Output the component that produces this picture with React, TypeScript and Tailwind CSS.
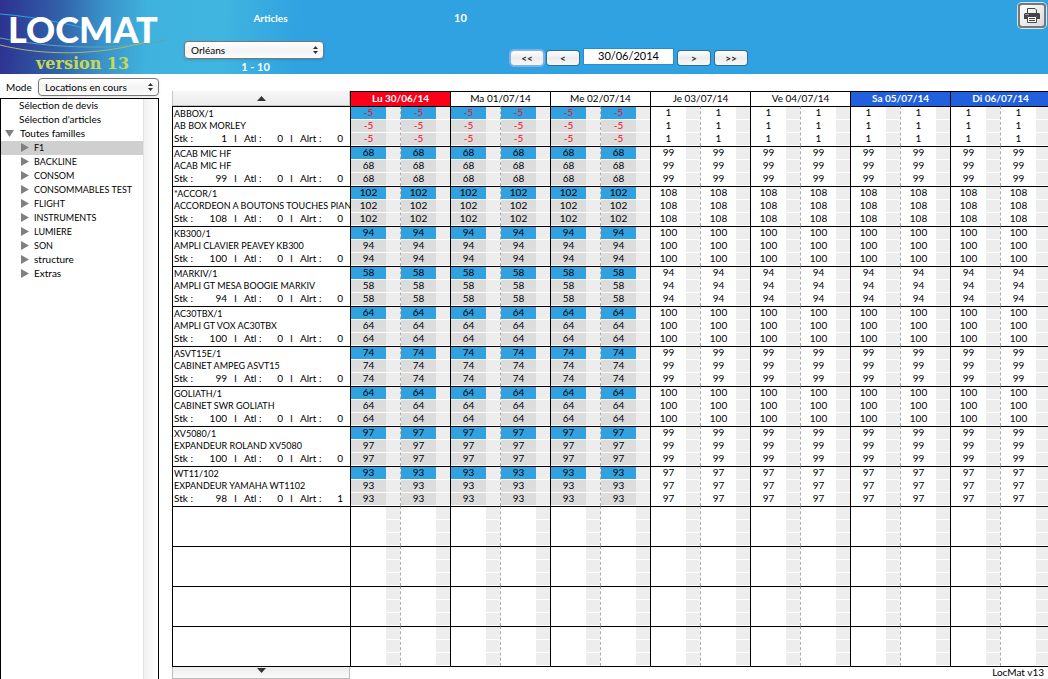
import React, { useState } from 'react';

type Mark = 'busy' | 'free' | 'short';

interface Article {
  code: string;
  name: string;
  stk: number;
  atl: number;
  alrt: number;
  rented: number;
  available: number;
}

const articles: Article[] = [
  { code: 'ABBOX/1', name: 'AB BOX MORLEY', stk: 1, atl: 0, alrt: 0, rented: -5, available: 1 },
  { code: 'ACAB MIC HF', name: 'ACAB MIC HF', stk: 99, atl: 0, alrt: 0, rented: 68, available: 99 },
  { code: '*ACCOR/1', name: 'ACCORDEON A BOUTONS TOUCHES PIAN', stk: 108, atl: 0, alrt: 0, rented: 102, available: 108 },
  { code: 'KB300/1', name: 'AMPLI CLAVIER PEAVEY KB300', stk: 100, atl: 0, alrt: 0, rented: 94, available: 100 },
  { code: 'MARKIV/1', name: 'AMPLI GT MESA BOOGIE MARKIV', stk: 94, atl: 0, alrt: 0, rented: 58, available: 94 },
  { code: 'AC30TBX/1', name: 'AMPLI GT VOX AC30TBX', stk: 100, atl: 0, alrt: 0, rented: 64, available: 100 },
  { code: 'ASVT15E/1', name: 'CABINET AMPEG ASVT15', stk: 99, atl: 0, alrt: 0, rented: 74, available: 99 },
  { code: 'GOLIATH/1', name: 'CABINET SWR GOLIATH', stk: 100, atl: 0, alrt: 0, rented: 64, available: 100 },
  { code: 'XV5080/1', name: 'EXPANDEUR ROLAND XV5080', stk: 100, atl: 0, alrt: 0, rented: 97, available: 99 },
  { code: 'WT11/102', name: 'EXPANDEUR YAMAHA WT1102', stk: 98, atl: 0, alrt: 1, rented: 93, available: 97 },
];

const days = [
  { label: 'Lu 30/06/14', style: 'bg-[#fb0019] text-white font-bold', rented: true },
  { label: 'Ma 01/07/14', style: 'bg-white font-normal', rented: true },
  { label: 'Me 02/07/14', style: 'bg-white font-normal', rented: true },
  { label: 'Je 03/07/14', style: 'bg-white font-normal', rented: false },
  { label: 'Ve 04/07/14', style: 'bg-white font-normal', rented: false },
  { label: 'Sa 05/07/14', style: 'bg-[#2160dd] text-white font-bold', rented: false },
  { label: 'Di 06/07/14', style: 'bg-[#2160dd] text-white font-bold', rented: false },
];

// morning / afternoon for each day
const halves = days.flatMap((day) => [
  { key: day.label + '-am', rented: day.rented, first: true },
  { key: day.label + '-pm', rented: day.rented, first: false },
]);

const families = ['F1', 'BACKLINE', 'CONSOM', 'CONSOMMABLES TEST', 'FLIGHT', 'INSTRUMENTS', 'LUMIERE', 'SON', 'structure', 'Extras'];

const Arrow: React.FC<{ dir: 'up' | 'down' | 'right'; className: string }> = ({ dir, className }) => {
  const points = { up: '0,10 5,0 10,10', down: '0,0 10,0 5,10', right: '0,0 10,5 0,10' }[dir];
  return (
    <svg viewBox="0 0 10 10" preserveAspectRatio="none" className={className} fill="currentColor" aria-hidden="true">
      <polygon points={points} />
    </svg>
  );
};

const Dropdown: React.FC<{ id: string; label: string; options: string[]; className: string }> = ({ id, label, options, className }) => (
  <div className={`relative ${className}`}>
    <select
      id={id}
      aria-label={label}
      className="block h-[18px] w-full appearance-none rounded border border-[#777] bg-linear-to-b from-white via-[#f4f4f4] to-[#fbfbfb] pl-1.5 text-[10px] leading-4 text-black shadow-sm"
    >
      {options.map((option) => (
        <option key={option}>{option}</option>
      ))}
    </select>
    <div className="pointer-events-none absolute inset-y-0 right-1.5 flex flex-col items-center justify-center gap-0.5 text-[#333]">
      <Arrow dir="up" className="h-[3px] w-[5px]" />
      <Arrow dir="down" className="h-[3px] w-[5px]" />
    </div>
  </div>
);

const NavButton: React.FC<{ label: string; title: string; focused?: boolean }> = ({ label, title, focused }) => (
  <button
    aria-label={title}
    className={`h-3.5 w-8 rounded-[3px] bg-linear-to-b from-white via-[#ececec] to-[#f8f8f8] text-[10px] leading-[14px] font-bold text-[#222] ${
      focused ? 'ring-2 ring-[#7fb0ea]' : 'ring-1 ring-[#2b6f9b]'
    }`}
  >
    {label}
  </button>
);

const Logo = () => (
  <div className="relative h-full w-[170px] shrink-0">
    <svg viewBox="0 0 170 74" className="absolute inset-0 h-full w-full" fill="none" aria-hidden="true">
      <path d="M0 14 C40 17 85 27 125 39" stroke="#27a9dd" />
      <path d="M0 38 C45 47 110 52 166 40" stroke="#5aa7b4" />
      <path d="M0 45 C40 55 95 57 150 41" stroke="#a9b676" />
    </svg>
    <div className="relative pt-[9px] pl-2 font-['Lato',sans-serif] text-[36px] leading-10 font-black text-white">LOCMAT</div>
    <div className="relative mt-1 pl-9 font-['DejaVu_Serif',serif] text-[16px] leading-[22px] font-bold whitespace-nowrap text-[#c9d94f]">
      version 13
    </div>
  </div>
);

const SlotValues: React.FC<{ values: number[]; rented: boolean }> = ({ values, rented }) => (
  <>
    {[0, 1, 2].map((line) => {
      const value = values[line];
      const mark: Mark = value === undefined || !rented ? 'free' : value < 0 ? 'short' : 'busy';
      const bg = mark === 'free' ? 'bg-white' : line === 0 ? 'bg-[#30a2e1]' : 'bg-[#dcdcdc]';
      return (
        <div key={line} className="flex h-[13px] border-b border-white">
          <div className={`w-[35px] shrink-0 text-center leading-[11px] ${bg} ${mark === 'short' ? 'text-[#fb0019]' : 'text-black'}`}>{value}</div>
          <div className="flex-1 bg-[#ededed]" />
        </div>
      );
    })}
  </>
);

const ArticleCell: React.FC<{ article: Article }> = ({ article }) => (
  <div className="h-[39px] pl-px leading-3 whitespace-nowrap">
    <div className="text-[9px] leading-[13px]">{article.code}</div>
    <div className="text-[9px]">{article.name}</div>
    <div className="flex">
      <span className="w-5">Stk :</span>
      <span className="w-[33px] text-right">{article.stk}</span>
      <span className="w-[17px] text-center">l</span>
      <span className="w-[19px]">Atl :</span>
      <span className="w-5 text-right">{article.atl}</span>
      <span className="w-[17px] text-center">l</span>
      <span className="w-6">Alrt :</span>
      <span className="w-[19px] text-right">{article.alrt}</span>
    </div>
  </div>
);

const Planning = () => {
  const rows: (Article | null)[] = [...articles, null, null, null, null];
  return (
    <table className="w-full min-w-[878px] table-fixed border-separate border-spacing-0 border-b border-black">
      <colgroup>
        <col className="w-[178px]" />
        {halves.map((half) => (
          <col key={half.key} />
        ))}
      </colgroup>
      <thead>
        <tr className="h-[15px]">
          <td className="p-0">
            <button aria-label="Articles précédents" className="flex h-[15px] w-full items-center justify-center border-x border-b border-[#c4c4c4] bg-linear-to-b from-[#f7f7f7] to-[#ececec] text-[#333]">
              <Arrow dir="up" className="h-[5px] w-[9px]" />
            </button>
          </td>
          {days.map((day) => (
            <th key={day.label} colSpan={2} className={`border-t border-l border-black p-0 pb-0.5 text-[10px] leading-3 ${day.style}`}>
              {day.label}
            </th>
          ))}
        </tr>
      </thead>
      <tbody>
        {rows.map((article, i) => (
          <tr key={i} className="h-10">
            <td className="border-t border-l border-black p-0">{article && <ArticleCell article={article} />}</td>
            {halves.map((half) => (
              <td
                key={half.key}
                className={`border-t border-l border-t-black p-0 ${half.first ? 'border-l-black' : 'border-l-[#aaa] [border-left-style:dashed]'}`}
              >
                <SlotValues
                  rented={half.rented}
                  values={article ? Array(3).fill(half.rented ? article.rented : article.available) : []}
                />
              </td>
            ))}
          </tr>
        ))}
      </tbody>
    </table>
  );
};

const Sidebar = () => {
  const [selected, setSelected] = useState('F1');

  return (
    <aside className="flex w-[159px] shrink-0 flex-col">
      <div className="flex h-6 items-center pt-0.5">
        <label htmlFor="mode" className="w-[38px] pl-1.5">Mode</label>
        <Dropdown id="mode" label="Mode" options={['Locations en cours']} className="flex-1" />
      </div>
      <div className="flex flex-1 border-x border-t border-black">
        <ul className="flex-1 leading-[13px] whitespace-nowrap">
          <li className="h-3.5"><button className="block pl-[18px]">Sélection de devis</button></li>
          <li className="h-3.5"><button className="block pl-[18px]">Sélection d'articles</button></li>
          <li className="h-3.5">
            <button className="flex items-center pl-1">
              <Arrow dir="down" className="mr-1.5 h-[7px] w-[9px] text-[#808080]" />
              Toutes familles
            </button>
          </li>
          {families.map((family) => (
            <li key={family} className="h-3.5">
              <button
                onClick={() => setSelected(family)}
                className={`flex h-3.5 w-full items-center pb-px pl-5 ${family === selected ? 'bg-[#cfcfcf]' : ''} ${
                  family === family.toUpperCase() ? 'text-[9px]' : ''
                }`}
              >
                <Arrow dir="right" className="mr-[5px] h-[9px] w-2 text-[#808080]" />
                {family}
              </button>
            </li>
          ))}
        </ul>
        <div className="w-[15px] border-l border-[#e2e2e2] bg-linear-to-r from-[#f1f1f1] to-white" />
      </div>
    </aside>
  );
};

const PrintIcon = () => (
  <svg viewBox="0 0 16 15" className="h-[15px] w-4" aria-hidden="true">
    <path d="M3.5 5 V0.5 H11 L12.5 2 V5" fill="none" stroke="#444" />
    <path d="M1 5 H15 L16 6 V11 H13 V8 H3 V11 H0 V6 Z" fill="#444" />
    <path d="M3.5 8.5 H12.5 V14.5 H3.5 Z" fill="#fff" stroke="#444" />
    <path d="M5 10.5 H11 M5 12.5 H11" stroke="#444" />
    <path d="M1.5 6.5 H2.5 M3.5 6.5 H4.5" stroke="#fff" />
  </svg>
);

export default function App() {
  return (
    <div className="flex h-screen flex-col overflow-hidden bg-white font-['Lato','Liberation_Sans',sans-serif] text-[10px] text-black">
      <header className="flex h-[74px] shrink-0 bg-[#30a2e1] bg-[linear-gradient(93deg,#2d3191_0px,#3161a9_60px,#3a92c9_105px,#3fb3de_150px,#3fb5e0_225px,#30a2e1_300px)] text-white">
        <Logo />
        <div className="flex w-[340px] shrink-0 flex-col pl-3.5">
          <div className="flex h-[42px] pt-[11px] leading-[14px] font-bold">
            <span className="w-[173px] text-center">Articles</span>
            <span className="ml-[97px] text-[11px]">10</span>
          </div>
          <Dropdown id="agency" label="Agence" options={['Orléans']} className="w-[140px]" />
          <div className="w-[143px] text-center text-[11px] leading-[15px] font-bold">1 - 10</div>
        </div>
        <nav className="flex flex-1 items-start gap-[5px] pt-[49px] pl-px">
          <div className="flex gap-1 pt-0.5">
            <NavButton label="<<" title="Semaine précédente" focused />
            <NavButton label="<" title="Jour précédent" />
          </div>
          <input
            aria-label="Date"
            defaultValue="30/06/2014"
            className="h-[15px] w-[89px] bg-white pb-0.5 text-center text-[11px] leading-[13px] text-black ring-1 ring-[#2790cc]"
          />
          <div className="flex gap-[5px] pt-0.5">
            <NavButton label=">" title="Jour suivant" />
            <NavButton label=">>" title="Semaine suivante" />
          </div>
        </nav>
        <div className="pt-[3px] pr-0.5">
          <button aria-label="Imprimer" className="flex h-[25px] w-7 items-center justify-center rounded border-2 border-[#777] bg-linear-to-br from-white to-[#dadada] ring-1 ring-[#d8e6ee]">
            <PrintIcon />
          </button>
        </div>
      </header>
      <div className="flex min-h-0 flex-1">
        <Sidebar />
        <main className="min-w-0 flex-1 overflow-hidden pt-[17px] pl-[13px]">
          <Planning />
          <div className="flex justify-between">
            <button aria-label="Articles suivants" className="flex h-3 w-[178px] justify-center border-x border-b border-[#bbb] bg-linear-to-b from-[#ececec] to-[#fafafa] pt-px text-[#333]">
              <Arrow dir="down" className="h-[5px] w-[9px]" />
            </button>
            <span className="pr-1 leading-[11px]">LocMat v13</span>
          </div>
        </main>
      </div>
    </div>
  );
}
